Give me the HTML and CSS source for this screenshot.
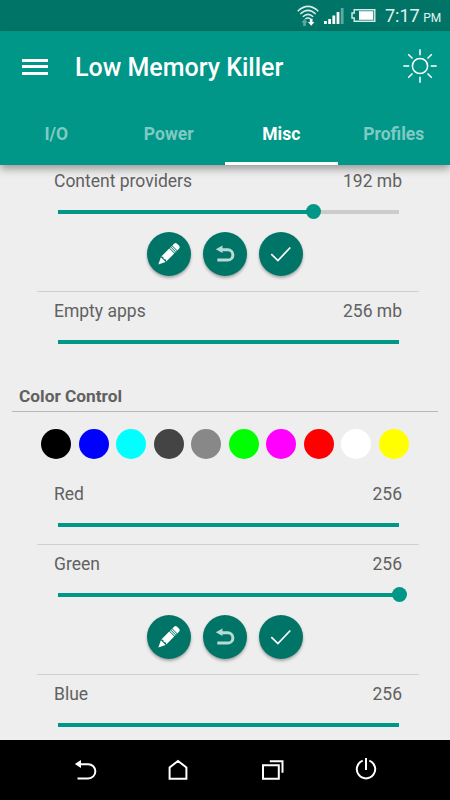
FILE: index.html
```
<!DOCTYPE html>
<html lang="en">
<head>
    <meta charset="UTF-8">
    <meta name="viewport" content="width=device-width, initial-scale=1.0">
    <title>Low Memory Killer</title>
    <link rel="stylesheet" href="styles.css">
</head>
<body>
    <!-- icons used more than once -->
    <svg class="defs">
        <symbol id="pencil" viewBox="0 0 44 44">
            <g transform="translate(11.3 32.5) rotate(-45)" fill="#fff">
                <path d="M0 0 7-3.3V3.3z"/>
                <path d="M7.8-3.5H19V3.5H7.8l1-1.7-1-1.8 1-1.8z"/>
                <path d="M19.8-3.5h1v7h-1zM21.6-3.5h1v7h-1zM23.4-3.5h2.4q2.2 0 2.2 2v3q0 2-2.2 2h-2.4z"/>
            </g>
        </symbol>
        <symbol id="undo" viewBox="0 0 44 44">
            <path d="M19 17.8h5.8a5 5 0 0 1 0 10.2H14.3" fill="none" stroke="#b9dbd6" stroke-width="3"/>
            <path d="M12.8 17.3 19.5 13.6v7.4z" fill="#b9dbd6"/>
        </symbol>
        <symbol id="check" viewBox="0 0 44 44">
            <path d="m12.3 22.2 6.6 6.4L31.3 15.5" fill="none" stroke="#fff" stroke-width="1.7"/>
        </symbol>
    </svg>

    <div class="status-bar">
        <svg class="wifi" width="22" height="22" viewBox="0 0 22 22" fill="none" stroke="#d7ebe8" stroke-width="1.5">
            <path d="M.7 6.2Q11-3.4 21.3 6.2M3.3 9Q11 1.8 18.7 9M5.8 11.7Q11 7 16.2 11.7M8.3 14Q11 11.8 13.7 14"/>
            <path d="m4.5 17.5 3-3.5 3 3.5H8.8V21H6.2v-3.5z" fill="#5fa99f" stroke="none"/>
            <path d="m11 17 3.2 3.8 3.2-3.8h-1.9v-3.2h-2.6V17z" fill="#fff" stroke="none"/>
        </svg>
        <svg class="signal" width="20" height="16" viewBox="0 0 20 16" fill="#fff">
            <path d="M0 13h2.8v3H0zM4.2 11H7v5H4.2zM8.4 7.5h2.8V16H8.4zM12.6 4h2.8v12h-2.8z"/>
            <path d="M16.8 0h2.8v16h-2.8z" fill="#5fa99f"/>
        </svg>
        <svg class="battery" width="25" height="13" viewBox="0 0 25 13">
            <path d="M3.2.7h20.6v11.6H3.2V9H1V4h2.2z" fill="none" stroke="#d7ebe8" stroke-width="1.4"/>
            <path d="M8 2.2h14.3v8.6H8z" fill="#fff"/>
        </svg>
        <div class="clock">7:17 <span>PM</span></div>
    </div>

    <header>
        <div class="toolbar">
            <div class="menu"><i></i><i></i><i></i></div>
            <h1>Low Memory Killer</h1>
            <svg class="sun" width="34" height="34" viewBox="0 0 34 34" fill="none" stroke="#fff" stroke-width="1.5">
                <circle cx="17" cy="17" r="7.6"/>
                <path d="M17 .3v6M17 27.7v6M.3 17h6M27.7 17h6M5.2 5.2l4.3 4.3M24.5 24.5l4.3 4.3M28.8 5.2l-4.3 4.3M9.5 24.5l-4.3 4.3"/>
            </svg>
        </div>
        <nav class="tabs">
            <a>I/O</a>
            <a>Power</a>
            <a class="active">Misc</a>
            <a>Profiles</a>
        </nav>
    </header>

    <main>
        <div class="settings memory">
            <div class="setting">
                <div class="label"><span>Content providers</span><span>192 mb</span></div>
                <div class="slider"><div class="fill" style="width: 75%"><b></b></div></div>
                <div class="buttons">
                    <button><svg><use href="#pencil"/></svg></button>
                    <button><svg><use href="#undo"/></svg></button>
                    <button><svg><use href="#check"/></svg></button>
                </div>
            </div>
            <div class="setting">
                <div class="label"><span>Empty apps</span><span>256 mb</span></div>
                <div class="slider"><div class="fill" style="width: 100%"></div></div>
            </div>
        </div>

        <h2>Color Control</h2>
        <div class="colors">
            <i class="black"></i>
            <i class="blue"></i>
            <i class="cyan"></i>
            <i class="dark"></i>
            <i class="gray"></i>
            <i class="green"></i>
            <i class="magenta"></i>
            <i class="red"></i>
            <i class="white"></i>
            <i class="yellow"></i>
        </div>

        <div class="settings">
            <div class="setting">
                <div class="label"><span>Red</span><span>256</span></div>
                <div class="slider"><div class="fill" style="width: 100%"></div></div>
            </div>
            <div class="setting">
                <div class="label"><span>Green</span><span>256</span></div>
                <div class="slider"><div class="fill" style="width: 100%"><b></b></div></div>
                <div class="buttons">
                    <button><svg><use href="#pencil"/></svg></button>
                    <button><svg><use href="#undo"/></svg></button>
                    <button><svg><use href="#check"/></svg></button>
                </div>
            </div>
            <div class="setting">
                <div class="label"><span>Blue</span><span>256</span></div>
                <div class="slider"><div class="fill" style="width: 100%"></div></div>
            </div>
        </div>
    </main>

    <footer>
        <svg width="24" height="24" viewBox="0 0 24 24" fill="none" stroke="#fff" stroke-width="2">
            <path d="M7 6.2h7.2a7.1 7.1 0 0 1 0 14.3H3.5"/>
            <path d="M.8 6 7 2v8z" fill="#fff" stroke="none"/>
        </svg>
        <svg width="24" height="24" viewBox="0 0 24 24" fill="none" stroke="#fff" stroke-width="2">
            <path d="M2.6 20.8V9.5l8.4-6.6 8.4 6.6v11.3z"/>
        </svg>
        <svg width="24" height="24" viewBox="0 0 24 24" fill="none" stroke="#fff" stroke-width="2">
            <path d="M2 7.2h15.8v13.6H2zM8.8 3.2h12.7v11.5"/>
        </svg>
        <svg width="24" height="24" viewBox="0 0 24 24" fill="none" stroke="#fff" stroke-width="2">
            <path d="M8.7 2.6a9.2 9.2 0 1 0 6.6 0M12 0v12"/>
        </svg>
    </footer>
</body>
</html>
```
FILE: styles.css
```
* {
    box-sizing: border-box;
}

body {
    margin: 0;
    height: 800px;
    display: flex;
    flex-direction: column;
    overflow: hidden;
    background-color: #eee;
    color: #616161;
    font-family: Roboto, sans-serif;
}

.defs {
    position: absolute;
    width: 0;
    height: 0;
}

.status-bar {
    height: 31px;
    flex-shrink: 0;
    display: flex;
    align-items: center;
    justify-content: flex-end;
    padding-right: 9px;
    background-color: #007567;
}

.wifi {
    margin: 0 5px 0 0;
}

.signal {
    margin: 1px 7px 0 0;
}

.battery {
    margin-right: 9px;
}

.clock {
    width: 56px;
    color: #e3f1ef;
    font-size: 18px;
    line-height: 31px;
    white-space: nowrap;
    padding-top: 3px;
}

.clock span {
    font-size: 12px;
    margin-left: -1px;
}

header {
    height: 134px;
    flex-shrink: 0;
    background-color: #009688;
    color: #fff;
    box-shadow: 0 4px 8px rgba(0, 0, 0, 0.35);
    z-index: 1;
}

.toolbar {
    height: 72px;
    display: flex;
    align-items: center;
    padding: 0 13px 2px 22px;
}

.menu {
    width: 26px;
    height: 16px;
    display: flex;
    flex-direction: column;
    justify-content: space-between;
    margin-top: 1px;
}

.menu i {
    height: 3px;
    background-color: #fff;
}

h1 {
    margin: 2px auto 0 27px;
    font-size: 25px;
    font-weight: 500;
    white-space: nowrap;
}

.tabs {
    height: 62px;
    display: grid;
    grid-template-columns: repeat(4, 1fr);
}

.tabs a {
    height: 62px;
    text-align: center;
    line-height: 62px;
    font-size: 17.5px;
    font-weight: bold;
    color: #7fcac3;
}

.tabs .active {
    color: #fff;
    border-bottom: 3px solid #fff;
}

main {
    flex: 1;
    min-height: 0;
    overflow: hidden;
}

.settings {
    padding: 0 31px 0 37px;
}

.memory {
    margin-top: -3px;
}

.setting + .setting {
    border-top: 1px solid #d0d0d0;
}

.setting {
    padding-bottom: 7px;
}

.label {
    height: 37px;
    display: flex;
    justify-content: space-between;
    padding: 0 17px;
    font-size: 17.5px;
    line-height: 38px;
}

.slider {
    height: 25px;
    display: flex;
    align-items: center;
    margin: 0 20px 0 21px;
    background: linear-gradient(#ccc, #ccc) center / 100% 4px no-repeat;
}

.slider .fill {
    height: 4px;
    display: flex;
    align-items: center;
    justify-content: flex-end;
    background-color: #009688;
}

.slider b {
    width: 15px;
    height: 15px;
    flex-shrink: 0;
    margin-right: -7.5px;
    border-radius: 50%;
    background-color: #009688;
}

.buttons {
    height: 60px;
    display: flex;
    justify-content: center;
    gap: 12.4px;
    padding: 8px 0 0;
    margin-right: 6px;
}

button {
    width: 44px;
    height: 44px;
    padding: 0;
    border: none;
    border-radius: 50%;
    background-color: #007567;
    box-shadow: 0 2px 3px rgba(0, 0, 0, 0.3);
}

button svg {
    display: block;
    width: 44px;
    height: 44px;
}

h2 {
    height: 51px;
    margin: 0 12px;
    padding: 20px 7px 0;
    border-bottom: 1px solid #b8b8b8;
    font-size: 17.3px;
    line-height: 31px;
}

.colors {
    display: flex;
    gap: 7.5px;
    padding: 17px 41px 16px;
}

.colors i {
    width: 30px;
    height: 30px;
    border-radius: 50%;
}

.black { background-color: #000; }
.blue { background-color: #00f; }
.cyan { background-color: #0ff; }
.dark { background-color: #444; }
.gray { background-color: #888; }
.green { background-color: #0f0; }
.magenta { background-color: #f0f; }
.red { background-color: #f00; }
.white { background-color: #fff; }
.yellow { background-color: #ff0; }

footer {
    height: 60px;
    flex-shrink: 0;
    display: flex;
    align-items: center;
    justify-content: space-between;
    padding: 0 72px 0 74px;
    background-color: #000;
}
```
